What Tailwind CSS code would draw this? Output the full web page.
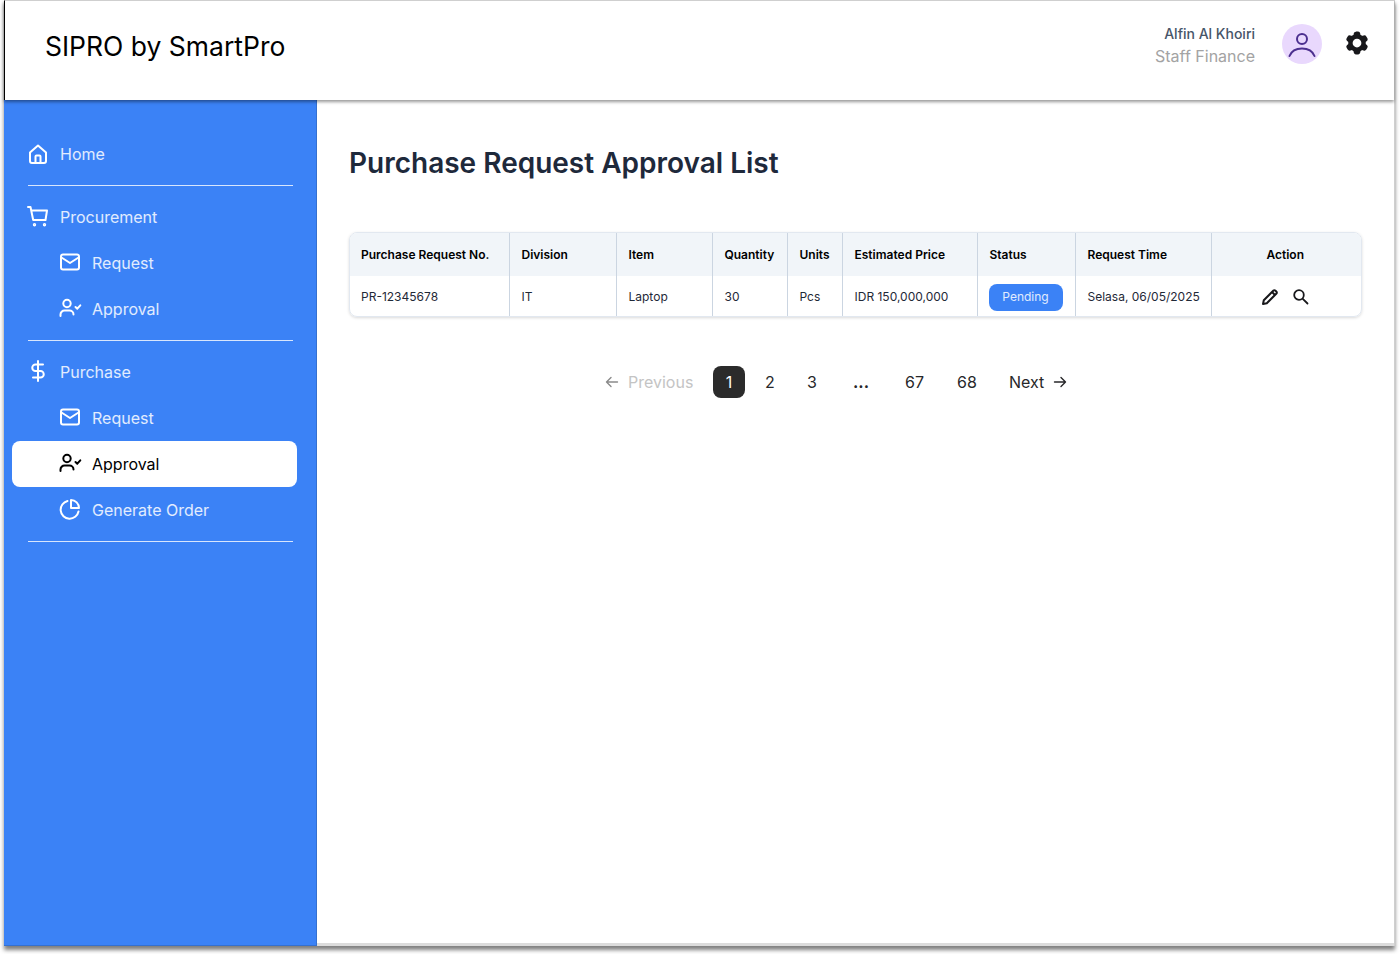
<!DOCTYPE html>
<html lang="en">
<head>
  <meta charset="UTF-8">
  <title>Purchase Request Approval List - SIPRO</title>
  <script src="https://cdn.jsdelivr.net/npm/@tailwindcss/browser@4"></script>
</head>
<body class="bg-white w-[1400px] h-[954px] overflow-hidden font-['Inter',sans-serif]">
  <div class="ml-1 w-[1391px] h-[946px] flex flex-col shadow-[0_4px_4px_rgba(0,0,0,0.5)] border-r border-[#cfcfcf]">

    <header class="relative z-10 h-[100px] shrink-0 bg-white flex items-start justify-between border-t border-[#cfcfcf] border-l border-l-black shadow-[0_2px_3px_rgba(0,0,0,0.4)]">
      <h1 class="ml-[40px] mt-[27px] text-[26.5px] leading-[36px] text-black font-normal">SIPRO by SmartPro</h1>
      <div class="flex items-start">
        <div class="mt-[23px] text-right">
          <p class="text-sm leading-[20px] font-medium text-[#475569]">Alfin Al Khoiri</p>
          <p class="mt-[2px] text-base leading-[20px] text-[#a3a3a3]">Staff Finance</p>
        </div>
        <div class="ml-[27px] mt-[23px] w-10 h-10 rounded-full bg-[#e9d8fd] flex items-center justify-center">
          <svg class="w-[30px] h-[30px]" viewBox="0 0 30 30" fill="none" stroke="#4c2f8f" stroke-width="2" stroke-linecap="round"><circle cx="15" cy="10" r="5"/><path d="M2.500 27c2-5 7-7.500 12.500-7.500s10.500 2.500 12.500 7.500"/></svg>
        </div>
        <svg class="ml-[21px] mr-[23px] mt-[28px] w-[28px] h-[28px]" viewBox="0 0 24 24" fill="#18181b"><path fill-rule="evenodd" clip-rule="evenodd" d="M11.078 2.250c-.917 0-1.699.663-1.850 1.567L9.050 4.889c-.02.120-.115.260-.297.348a7.493 7.493 0 0 0-.986.570c-.166.115-.334.126-.450.083L6.300 5.508a1.875 1.875 0 0 0-2.282.819l-.922 1.597a1.875 1.875 0 0 0 .432 2.385l.840.692c.095.078.170.229.154.430a7.598 7.598 0 0 0 0 1.139c.015.200-.059.352-.153.430l-.841.692a1.875 1.875 0 0 0-.432 2.385l.922 1.597a1.875 1.875 0 0 0 2.282.818l1.019-.382c.115-.043.283-.031.450.082.312.214.641.405.985.570.182.088.277.228.297.350l.178 1.071c.151.904.933 1.567 1.850 1.567h1.844c.916 0 1.699-.663 1.850-1.567l.178-1.072c.020-.120.114-.260.297-.349.344-.165.673-.356.985-.570.167-.114.335-.125.450-.082l1.020.382a1.875 1.875 0 0 0 2.280-.819l.923-1.597a1.875 1.875 0 0 0-.432-2.385l-.840-.692c-.095-.078-.170-.229-.154-.430a7.614 7.614 0 0 0 0-1.139c-.016-.200.059-.352.153-.430l.840-.692c.708-.582.891-1.590.433-2.385l-.922-1.597a1.875 1.875 0 0 0-2.282-.818l-1.020.382c-.114.043-.282.031-.449-.083a7.490 7.490 0 0 0-.985-.570c-.183-.087-.277-.227-.297-.348l-.179-1.072a1.875 1.875 0 0 0-1.850-1.567h-1.843ZM12 15.750a3.750 3.750 0 1 0 0-7.500 3.750 3.750 0 0 0 0 7.500Z"/></svg>
      </div>
    </header>

    <div class="flex flex-1 min-h-0">
      <aside class="w-[313px] shrink-0 bg-[#3b82f6] border-r border-b border-[#3470d0] pt-[31px] pl-2 pr-[19px] text-base text-white/85">
        <a class="h-[46px] flex items-center pl-[14px] gap-[10px]">
          <svg class="w-6 h-6 shrink-0" viewBox="0 0 24 24" fill="none" stroke="white" stroke-width="2" stroke-linejoin="round"><path d="M4 10.500 12 3.500l8 7V19a2 2 0 0 1-2 2H6a2 2 0 0 1-2-2z"/><path d="M9.500 21v-6.500a1 1 0 0 1 1-1h3a1 1 0 0 1 1 1V21"/></svg>
          <span>Home</span>
        </a>
        <div class="h-px bg-white/80 my-2 ml-4 w-[265px]"></div>

        <a class="h-[46px] flex items-center pl-[14px] gap-[10px]">
          <svg class="w-6 h-6 shrink-0 -mt-[3px]" viewBox="0 0 24 24" fill="none" stroke="white" stroke-width="2" stroke-linecap="round" stroke-linejoin="round"><path d="M2 3h2.500l2.700 13h12.300l1.500-9.500H5.300"/><circle cx="8.500" cy="20.800" r=".7"/><circle cx="18.500" cy="20.800" r=".7"/></svg>
          <span>Procurement</span>
        </a>
        <a class="h-[46px] flex items-center pl-[46px] gap-[10px]">
          <svg class="w-6 h-6 shrink-0 -mt-[3px]" viewBox="0 0 24 24" fill="none" stroke="white" stroke-width="2" stroke-linecap="round" stroke-linejoin="round"><rect x="3" y="4.500" width="18" height="15" rx="2"/><path d="M3.500 7.500 12 13l8.500-5.500"/></svg>
          <span>Request</span>
        </a>
        <a class="h-[46px] flex items-center pl-[46px] gap-[10px]">
          <svg class="w-6 h-6 shrink-0 -mt-[3px]" viewBox="0 0 24 24" fill="none" stroke="white" stroke-width="2" stroke-linecap="round" stroke-linejoin="round"><circle cx="9" cy="7.500" r="3.700"/><path d="M2.500 20v-1.500a4 4 0 0 1 4-4h5a4 4 0 0 1 4 4"/><path d="M17.500 11l1.800 1.700 3-3.400"/></svg>
          <span>Approval</span>
        </a>
        <div class="h-px bg-white/80 my-2 ml-4 w-[265px]"></div>

        <a class="h-[46px] flex items-center pl-[14px] gap-[10px]">
          <svg class="w-6 h-6 shrink-0 -mt-[3px]" viewBox="0 0 24 24" fill="none" stroke="white" stroke-width="2" stroke-linecap="round" stroke-linejoin="round"><path d="M12 2v20M17 5.500H9.500a3.200 3.200 0 0 0 0 6.500h5a3.200 3.200 0 0 1 0 6.500H7"/></svg>
          <span>Purchase</span>
        </a>
        <a class="h-[46px] flex items-center pl-[46px] gap-[10px]">
          <svg class="w-6 h-6 shrink-0 -mt-[3px]" viewBox="0 0 24 24" fill="none" stroke="white" stroke-width="2" stroke-linecap="round" stroke-linejoin="round"><rect x="3" y="4.500" width="18" height="15" rx="2"/><path d="M3.500 7.500 12 13l8.500-5.500"/></svg>
          <span>Request</span>
        </a>
        <a class="h-[46px] flex items-center pl-[46px] gap-[10px] bg-white rounded-lg text-black">
          <svg class="w-6 h-6 shrink-0 -mt-[3px]" viewBox="0 0 24 24" fill="none" stroke="black" stroke-width="2" stroke-linecap="round" stroke-linejoin="round"><circle cx="9" cy="7.500" r="3.700"/><path d="M2.500 20v-1.500a4 4 0 0 1 4-4h5a4 4 0 0 1 4 4"/><path d="M17.500 11l1.800 1.700 3-3.400"/></svg>
          <span>Approval</span>
        </a>
        <a class="h-[46px] flex items-center pl-[46px] gap-[10px]">
          <svg class="w-6 h-6 shrink-0 -mt-[3px]" viewBox="0 0 24 24" fill="none" stroke="white" stroke-width="2" stroke-linecap="round" stroke-linejoin="round"><path d="M20.500 14.500A9 9 0 1 1 9.500 4"/><path d="M13 3a8 8 0 0 1 8 8h-8z"/></svg>
          <span>Generate Order</span>
        </a>
        <div class="h-px bg-white/80 my-2 ml-4 w-[265px]"></div>
      </aside>

      <main class="flex-1 min-w-0 bg-white border-b-[3px] border-[#dcdcdc] pl-8 pr-8 pt-[45px]">
        <h2 class="text-[28px] leading-[36px] font-semibold text-[#1e293b]">Purchase Request Approval List</h2>

        <div class="mt-[51px] w-[1013px] rounded-lg border border-[#e2e8f0] shadow-[0_1px_3px_rgba(0,0,0,0.15)] overflow-hidden">
          <table class="w-full table-fixed border-collapse text-xs text-[#1f2937]">
            <colgroup>
              <col class="w-[159px]"><col class="w-[107px]"><col class="w-[96px]"><col class="w-[75px]"><col class="w-[55px]"><col class="w-[135px]"><col class="w-[98px]"><col class="w-[136px]"><col>
            </colgroup>
            <thead class="bg-[#f1f5f9] text-black">
              <tr class="h-[43px]">
                <th class="px-[11px] text-left font-semibold border-r border-[#cbd5e1] whitespace-nowrap">Purchase Request No.</th>
                <th class="pl-[12px] pr-[10px] text-left font-semibold border-r border-[#cbd5e1]">Division</th>
                <th class="pl-[12px] pr-[10px] text-left font-semibold border-r border-[#cbd5e1]">Item</th>
                <th class="pl-[12px] pr-[10px] text-left font-semibold border-r border-[#cbd5e1]">Quantity</th>
                <th class="pl-[12px] pr-[10px] text-left font-semibold border-r border-[#cbd5e1]">Units</th>
                <th class="pl-[12px] pr-[10px] text-left font-semibold border-r border-[#cbd5e1] whitespace-nowrap">Estimated Price</th>
                <th class="pl-[12px] pr-[10px] text-left font-semibold border-r border-[#cbd5e1]">Status</th>
                <th class="pl-[12px] pr-[10px] text-left font-semibold border-r border-[#cbd5e1]">Request Time</th>
                <th class="pl-[11px] pr-[13px] text-center font-semibold">Action</th>
              </tr>
            </thead>
            <tbody>
              <tr class="h-[40px]">
                <td class="px-[11px] pt-[2px] border-r border-[#cbd5e1]">PR-12345678</td>
                <td class="pl-[12px] pr-[10px] pt-[2px] border-r border-[#cbd5e1]">IT</td>
                <td class="pl-[12px] pr-[10px] pt-[2px] border-r border-[#cbd5e1]">Laptop</td>
                <td class="pl-[12px] pr-[10px] pt-[2px] border-r border-[#cbd5e1]">30</td>
                <td class="pl-[12px] pr-[10px] pt-[2px] border-r border-[#cbd5e1]">Pcs</td>
                <td class="pl-[12px] pr-[10px] pt-[2px] border-r border-[#cbd5e1] whitespace-nowrap">IDR 150,000,000</td>
                <td class="px-[11px] pt-[2px] border-r border-[#cbd5e1]">
                  <span class="flex items-center justify-center w-[74px] h-[27px] rounded-lg bg-[#3b82f6] text-white/85">Pending</span>
                </td>
                <td class="pl-[12px] pr-[10px] pt-[2px] border-r border-[#cbd5e1] whitespace-nowrap">Selasa, 06/05/2025</td>
                <td class="pl-[11px] pr-[13px] pt-[2px]">
                  <div class="flex items-center justify-center gap-[13px]">
                    <svg class="w-[18px] h-[18px]" viewBox="0 0 18 18" fill="none" stroke="#18181b" stroke-width="2" stroke-linejoin="round"><path d="M2 16l.8-3.800L12.500 2.500a1.200 1.200 0 0 1 1.700 0l1.300 1.300a1.200 1.200 0 0 1 0 1.700L5.800 15.200z"/><path d="M11 4l3 3" /></svg>
                    <svg class="w-[18px] h-[18px]" viewBox="0 0 18 18" fill="none" stroke="#18181b" stroke-width="1.800" stroke-linecap="round"><circle cx="7" cy="7" r="4.800"/><path d="M10.800 10.800l4.700 4.700"/></svg>
                  </div>
                </td>
              </tr>
            </tbody>
          </table>
        </div>

        <nav class="mt-[49px] flex items-center text-base text-[#27272a]">
          <div class="ml-[256px] flex items-center gap-[9px] w-[98px] text-[#c4c4c4]">
            <svg class="w-[14px] h-[14px] shrink-0" viewBox="0 0 14 14" fill="none" stroke="#8a8a8a" stroke-width="1.400" stroke-linecap="round" stroke-linejoin="round"><path d="M12.500 7h-11M6 2.500 1.500 7 6 11.500"/></svg>
            <span>Previous</span>
          </div>
          <div class="flex items-center gap-[10px] ml-[10px]">
            <span class="w-8 h-8 rounded-lg bg-[#2b2b2b] text-white flex items-center justify-center">1</span>
            <span class="-ml-px w-8 h-8 flex items-center justify-center">2</span>
            <span class="w-8 h-8 flex items-center justify-center">3</span>
            <span class="w-[46px] h-8 flex items-center justify-center font-bold">...</span>
            <span class="-ml-px w-[43px] h-8 flex items-center justify-center">67</span>
            <span class="w-[42px] h-8 flex items-center justify-center">68</span>
            <span class="ml-[11px] flex items-center gap-[9px]">Next
              <svg class="w-[14px] h-[14px] shrink-0" viewBox="0 0 14 14" fill="none" stroke="#27272a" stroke-width="1.400" stroke-linecap="round" stroke-linejoin="round"><path d="M1.500 7h11M8 2.500 12.500 7 8 11.500"/></svg>
            </span>
          </div>
        </nav>
      </main>
    </div>
  </div>
</body>
</html>
